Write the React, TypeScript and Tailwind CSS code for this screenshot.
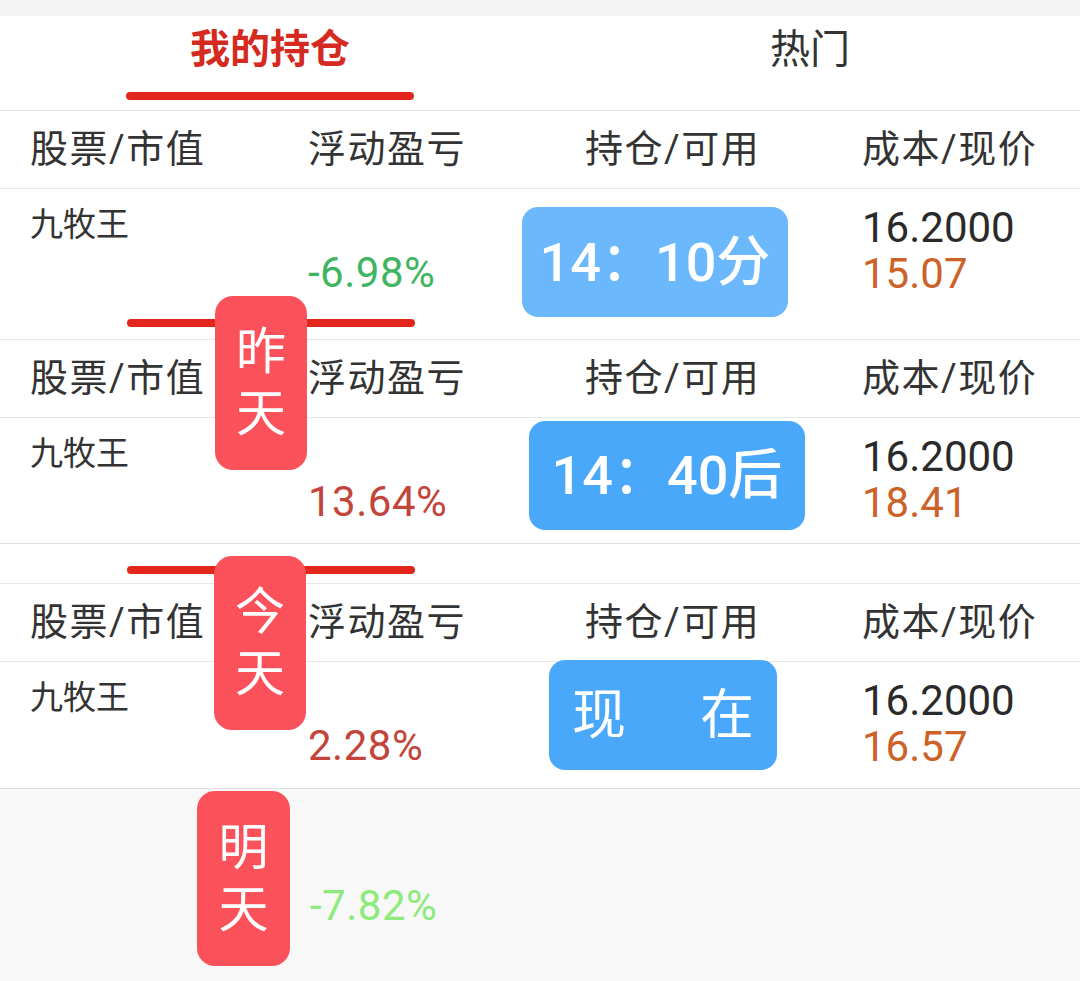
import React from "react";

const FONT = "[font-family:Roboto,'Noto_Sans_CJK_SC',sans-serif]";

type RowData = {
  pnl: string;
  pnlColor: string;
  price: string;
  badge: React.ReactNode;
  badgeClass: string;
};

const HeaderRow = () => (
  <div className="grid h-[78px] grid-cols-[278px_277px_277px_1fr] items-center border-b border-[#e7e7e7] px-[30px] text-[38px] tracking-[1.5px] text-[#333]">
    <span>股票/市值</span>
    <span>浮动盈亏</span>
    <span>持仓/可用</span>
    <span>成本/现价</span>
  </div>
);

const DataRow = ({ row, height }: { row: RowData; height: string }) => (
  <div className={`relative grid grid-cols-[278px_277px_277px_1fr] px-[30px] ${height}`}>
    <div className="pt-[18px] text-[33px] leading-[36px] text-[#333]">九牧王</div>
    <div className={`pt-[62px] text-[42px] leading-[44px] tracking-[0.5px] ${row.pnlColor}`}>{row.pnl}</div>
    <div />
    <div className="pt-[16px] text-[42px] leading-[46px]">
      <div className="text-[#2a2a2a]">16.2000</div>
      <div className="text-[#cc6228]">{row.price}</div>
    </div>
    {/* blue sticker over the 持仓 column */}
    <div
      className={`absolute flex items-center rounded-[16px] text-[54px] font-medium text-white ${row.badgeClass}`}
    >
      {row.badge}
    </div>
  </div>
);

const Underline = () => <div className="h-[8px] w-[288px] rounded-full bg-[#e2261b]" />;

const TabSnippet = ({ top, h }: { top: string; h: string }) => (
  <div className={`flex flex-col border-b border-[#e7e7e7] ${h} ${top}`}>
    <div className="pl-[127px]">
      <Underline />
    </div>
  </div>
);

const DayTag = ({ text, pos }: { text: [string, string]; pos: string }) => (
  <div
    className={`absolute flex flex-col items-center justify-center gap-[6px] rounded-[18px] bg-[#fb515a] text-[50px] leading-[56px] text-white ${pos}`}
  >
    <span>{text[0]}</span>
    <span>{text[1]}</span>
  </div>
);

export default function App() {
  const rows: RowData[] = [
    {
      pnl: "-6.98%",
      pnlColor: "text-[#3fb562]",
      price: "15.07",
      badge: <span className="w-full text-center">14：10分</span>,
      badgeClass: "left-[522px] top-[18px] h-[110px] w-[266px] bg-[#6cb8fc]",
    },
    {
      pnl: "13.64%",
      pnlColor: "text-[#c2443a]",
      price: "18.41",
      badge: <span className="w-full text-center">14：40后</span>,
      badgeClass: "left-[529px] top-[3px] h-[109px] w-[276px] bg-[#4aa8fb]",
    },
    {
      pnl: "2.28%",
      pnlColor: "text-[#c2443a]",
      price: "16.57",
      badge: (
        <span className="flex w-full justify-between px-[23px] font-normal">
          <span>现</span>
          <span>在</span>
        </span>
      ),
      badgeClass: "left-[549px] top-[-2px] h-[110px] w-[228px] bg-[#4aa8fb]",
    },
  ];

  return (
    <div className={`relative h-[981px] w-[1080px] overflow-hidden bg-[#f8f8f8] ${FONT}`}>
      <div className="h-[16px] bg-[#f4f4f4]" />

      <div className="bg-white">
        {/* tab bar */}
        <div className="grid h-[95px] grid-cols-2 border-b border-[#e7e7e7]">
          <div className="flex flex-col items-center">
            <span className="pt-[10px] text-[40px] font-bold leading-[48px] text-[#d42a1f]">我的持仓</span>
            <div className="mt-[18px]">
              <Underline />
            </div>
          </div>
          <div className="flex justify-center">
            <span className="pt-[10px] text-[40px] leading-[48px] text-[#333]">热门</span>
          </div>
        </div>

        <HeaderRow />
        <DataRow row={rows[0]} height="h-[110px]" />
        <TabSnippet top="pt-[20px]" h="h-[41px]" />

        <HeaderRow />
        <div className="border-b border-[#e0e0e0]">
          <DataRow row={rows[1]} height="h-[125px]" />
        </div>
        <TabSnippet top="pt-[22px]" h="h-[40px]" />

        <HeaderRow />
        <div className="border-b border-[#dcdcdc]">
          <DataRow row={rows[2]} height="h-[126px]" />
        </div>
      </div>

      {/* last piece: tomorrow */}
      <div className="pl-[310px] pt-[95px] text-[42px] leading-[44px] tracking-[0.5px] text-[#8deb7c]">-7.82%</div>

      <DayTag text={["昨", "天"]} pos="left-[215px] top-[296px] h-[174px] w-[92px]" />
      <DayTag text={["今", "天"]} pos="left-[214px] top-[556px] h-[174px] w-[92px]" />
      <DayTag text={["明", "天"]} pos="left-[197px] top-[791px] h-[175px] w-[93px]" />
    </div>
  );
}
